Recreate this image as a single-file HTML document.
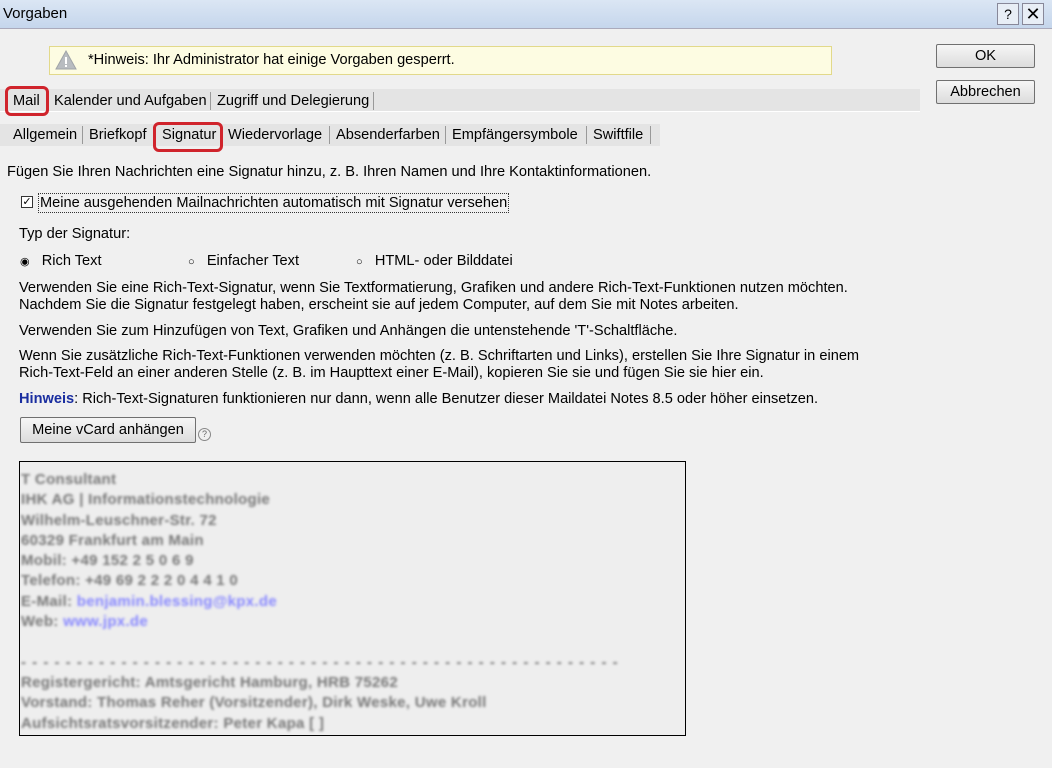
<!DOCTYPE html>
<html><head><style>
body{margin:0;width:1052px;height:768px;background:#f0f0f0;font-family:"Liberation Sans",sans-serif;font-size:14.6px;color:#000;position:relative;overflow:hidden}
.a{position:absolute;white-space:nowrap}
.title{left:0;top:0;width:1052px;height:28px;background:linear-gradient(#dbe6f4,#c5d6ec);border-bottom:1px solid #aab}
.btn{position:absolute;background:linear-gradient(#f6f6f6,#dcdcdc);border:1px solid #707070;border-radius:2px;text-align:center;font-size:14.6px}
.sep{position:absolute;width:1px;height:18px;background:#999}
.red{position:absolute;border:3px solid #d0242c;border-radius:6px}
.blur{filter:blur(1.4px);color:#777;font-size:15px;line-height:20.3px;font-weight:bold;letter-spacing:0.3px}
</style></head><body>
<div class="a title"><span class="a" style="left:3px;top:5px;font-size:15px">Vorgaben</span>
<div class="a" style="left:997px;top:3px;width:20px;height:20px;border:1px solid #889;background:#e8eef6;text-align:center;line-height:20px;font-size:14px">?</div>
<div class="a" style="left:1022px;top:3px;width:20px;height:20px;border:1px solid #889;background:#e8eef6;text-align:center;line-height:20px;font-size:18px">✕</div></div>
<div class="a" style="left:49px;top:46px;width:781px;height:27px;background:#fdfce2;border:1px solid #e2d98a"></div>
<svg class="a" style="left:55px;top:50px" width="22" height="20"><polygon points="11,1 21,19 1,19" fill="#b8bcc0" stroke="#a0a4a8"/><rect x="10" y="7" width="2" height="7" fill="#fff"/><rect x="10" y="15" width="2" height="2" fill="#fff"/></svg>
<div class="a" style="left:88px;top:52px">*Hinweis: Ihr Administrator hat einige Vorgaben gesperrt.</div>
<div class="btn" style="left:936px;top:44px;width:97px;height:22px;line-height:22px">OK</div>
<div class="btn" style="left:936px;top:80px;width:97px;height:22px;line-height:22px">Abbrechen</div>
<div class="a" style="left:0;top:89px;width:920px;height:22px;background:#e4e4e4;border-bottom:1px solid #fff"></div>
<div class="a" style="left:13px;top:93px">Mail</div><div class="sep" style="left:47px;top:92px"></div>
<div class="a" style="left:54px;top:93px">Kalender und Aufgaben</div><div class="sep" style="left:210px;top:92px"></div>
<div class="a" style="left:217px;top:93px">Zugriff und Delegierung</div><div class="sep" style="left:373px;top:92px"></div>
<div class="red" style="left:5px;top:86px;width:38px;height:24px"></div>
<div class="a" style="left:0;top:124px;width:660px;height:22px;background:#e4e4e4"></div>
<div class="a" style="left:13px;top:127px">Allgemein</div><div class="sep" style="left:82px;top:126px"></div>
<div class="a" style="left:89px;top:127px">Briefkopf</div><div class="sep" style="left:154px;top:126px"></div>
<div class="a" style="left:162px;top:127px">Signatur</div><div class="sep" style="left:221px;top:126px"></div>
<div class="a" style="left:228px;top:127px">Wiedervorlage</div><div class="sep" style="left:329px;top:126px"></div>
<div class="a" style="left:336px;top:127px">Absenderfarben</div><div class="sep" style="left:445px;top:126px"></div>
<div class="a" style="left:452px;top:127px">Empfängersymbole</div><div class="sep" style="left:586px;top:126px"></div>
<div class="a" style="left:593px;top:127px">Swiftfile</div><div class="sep" style="left:650px;top:126px"></div>
<div class="red" style="left:153px;top:122px;width:64px;height:24px"></div>
<div class="a" style="left:7px;top:164px">Fügen Sie Ihren Nachrichten eine Signatur hinzu, z. B. Ihren Namen und Ihre Kontaktinformationen.</div>
<div class="a" style="left:21px;top:196px;width:10px;height:10px;border:1px solid #333;background:#fff;font-size:11px;line-height:10px;text-align:center">✓</div>
<div class="a" style="left:38px;top:193px;border:1px dotted #333;padding:1px 1px">Meine ausgehenden Mailnachrichten automatisch mit Signatur versehen</div>
<div class="a" style="left:19px;top:226px">Typ der Signatur:</div>
<div class="a" style="left:20px;top:253px"><span style="font-size:11px">◉</span>&nbsp;&nbsp; Rich Text</div>
<div class="a" style="left:188px;top:253px"><span style="font-size:11px">○</span>&nbsp;&nbsp; Einfacher Text</div>
<div class="a" style="left:356px;top:253px"><span style="font-size:11px">○</span>&nbsp;&nbsp; HTML- oder Bilddatei</div>
<div class="a" style="left:19px;top:280px;line-height:17px">Verwenden Sie eine Rich-Text-Signatur, wenn Sie Textformatierung, Grafiken und andere Rich-Text-Funktionen nutzen möchten.<br>Nachdem Sie die Signatur festgelegt haben, erscheint sie auf jedem Computer, auf dem Sie mit Notes arbeiten.</div>
<div class="a" style="left:19px;top:323px">Verwenden Sie zum Hinzufügen von Text, Grafiken und Anhängen die untenstehende 'T'-Schaltfläche.</div>
<div class="a" style="left:19px;top:348px;line-height:17px">Wenn Sie zusätzliche Rich-Text-Funktionen verwenden möchten (z. B. Schriftarten und Links), erstellen Sie Ihre Signatur in einem<br>Rich-Text-Feld an einer anderen Stelle (z. B. im Haupttext einer E-Mail), kopieren Sie sie und fügen Sie sie hier ein.</div>
<div class="a" style="left:19px;top:391px"><b style="color:#1a2ea0">Hinweis</b>: Rich-Text-Signaturen funktionieren nur dann, wenn alle Benutzer dieser Maildatei Notes 8.5 oder höher einsetzen.</div>
<div class="btn" style="left:20px;top:417px;width:174px;height:24px;line-height:24px">Meine vCard anhängen</div>
<div class="a" style="left:198px;top:428px;width:11px;height:11px;border:1px solid #888;border-radius:50%;font-size:9px;text-align:center;line-height:11px;color:#666">?</div>
<div class="a" style="left:19px;top:461px;width:665px;height:273px;border:1px solid #000;background:#eeeeee"></div>
<div class="a blur" style="left:21px;top:470px">T Consultant<br>IHK AG | Informationstechnologie<br>Wilhelm-Leuschner-Str. 72<br>60329 Frankfurt am Main<br>Mobil: +49 152 2 5 0 6 9<br>Telefon: +49 69 2 2 2 0 4 4 1 0<br>E-Mail: <span style="color:#88f">benjamin.blessing@kpx.de</span><br>Web: <span style="color:#88f">www.jpx.de</span><br><br><span style="letter-spacing:1px">- - - - - - - - - - - - - - - - - - - - - - - - - - - - - - - - - - - - - - - - - - - - - - - - - - - - - -</span><br>Registergericht: Amtsgericht Hamburg, HRB 75262<br>Vorstand: Thomas Reher (Vorsitzender), Dirk Weske, Uwe Kroll<br>Aufsichtsratsvorsitzender: Peter Kapa [ ]</div>
</body></html>
